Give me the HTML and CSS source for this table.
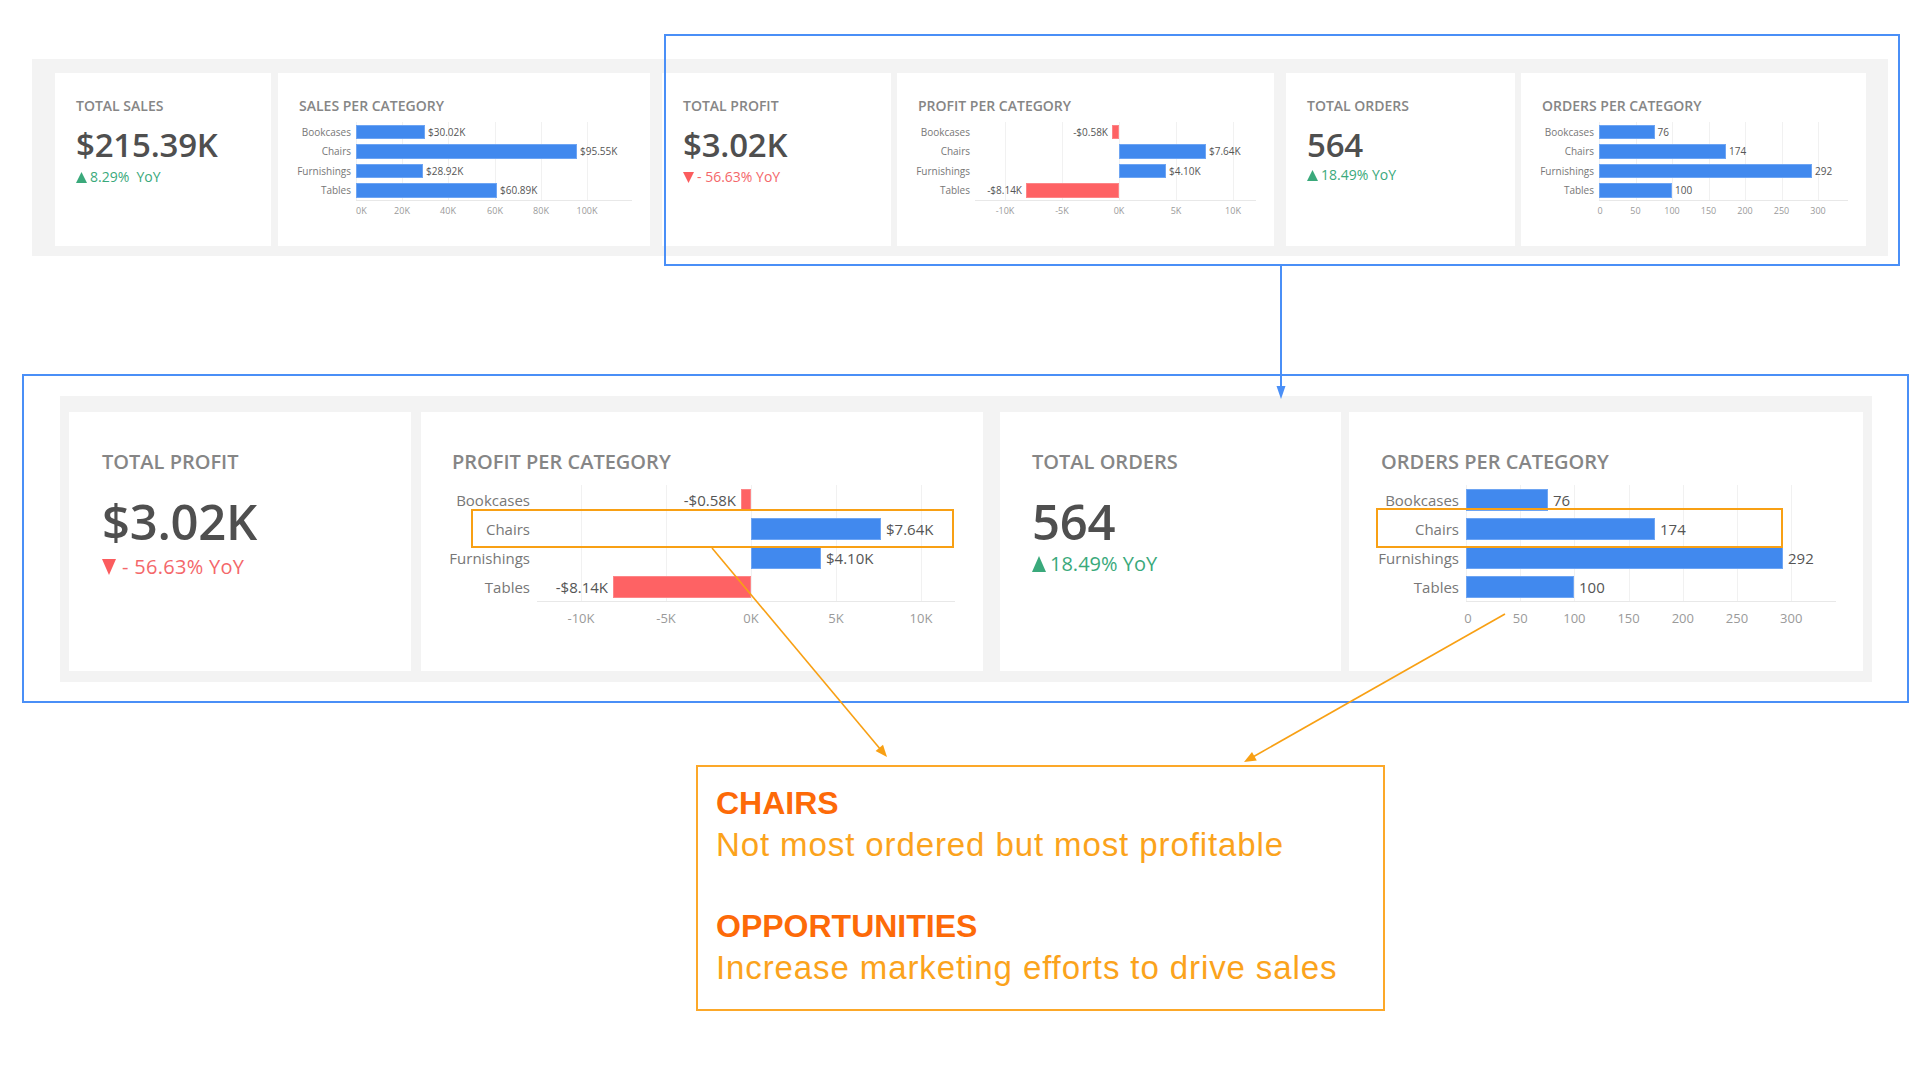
FILE: index.html
```html
<!DOCTYPE html>
<html lang="en">
<head>
<meta charset="utf-8">
<title>Dashboard insight</title>
<link rel="stylesheet" href="styles.css">
</head>
<body>
<div class="page">

  <section class="band band-top">
    <div class="card kpi-sm c-w216">
      <div class="title-sm">TOTAL SALES</div>
      <div class="value-sm">$215.39K</div>
      <div class="yoy yoy-sm up"><svg class="tri-sm" viewBox="0 0 10 10"><polygon points="5,0 10,10 0,10"/></svg><span>8.29%&nbsp; YoY</span></div>
    </div>

    <div class="card chart-card-sm c-w372 ml7">
      <div class="title-sm">SALES PER CATEGORY</div>
      <div class="chart chart-sm">
        <div class="cats"><span>Bookcases</span><span>Chairs</span><span>Furnishings</span><span>Tables</span></div>
        <div class="plot">
          <i class="gl" style="left:0px"></i><i class="gl" style="left:46px"></i><i class="gl" style="left:92px"></i><i class="gl" style="left:139px"></i><i class="gl" style="left:185px"></i><i class="gl" style="left:231px"></i>
          <div class="row"><div class="bar" style="width:69px"></div><span class="val">$30.02K</span></div>
          <div class="row"><div class="bar" style="width:221px"></div><span class="val">$95.55K</span></div>
          <div class="row"><div class="bar" style="width:67px"></div><span class="val">$28.92K</span></div>
          <div class="row"><div class="bar" style="width:141px"></div><span class="val">$60.89K</span></div>
        </div>
        <div class="ticks"><span class="first" style="left:0px">0K</span><span style="left:46px">20K</span><span style="left:92px">40K</span><span style="left:139px">60K</span><span style="left:185px">80K</span><span style="left:231px">100K</span></div>
      </div>
    </div>

    <div class="card kpi-sm c-w229 ml12">
      <div class="title-sm">TOTAL PROFIT</div>
      <div class="value-sm">$3.02K</div>
      <div class="yoy yoy-sm down"><svg class="tri-sm" viewBox="0 0 10 10"><polygon points="0,0 10,0 5,10"/></svg><span>- 56.63% YoY</span></div>
    </div>

    <div class="card chart-card-sm c-w377 ml6">
      <div class="title-sm">PROFIT PER CATEGORY</div>
      <div class="chart chart-sm">
        <div class="cats"><span>Bookcases</span><span>Chairs</span><span>Furnishings</span><span>Tables</span></div>
        <div class="plot">
          <i class="gl" style="left:30px"></i><i class="gl" style="left:87px"></i><i class="gl" style="left:144px"></i><i class="gl" style="left:201px"></i><i class="gl" style="left:258px"></i>
          <div class="row"><div class="neg neg-sm"><span class="val nval">-$0.58K</span><div class="bar red" style="width:7px"></div></div><div class="pos"></div></div>
          <div class="row"><div class="neg neg-sm"></div><div class="pos"><div class="bar" style="width:87px"></div><span class="val">$7.64K</span></div></div>
          <div class="row"><div class="neg neg-sm"></div><div class="pos"><div class="bar" style="width:47px"></div><span class="val">$4.10K</span></div></div>
          <div class="row"><div class="neg neg-sm"><span class="val nval">-$8.14K</span><div class="bar red" style="width:93px"></div></div><div class="pos"></div></div>
        </div>
        <div class="ticks"><span style="left:30px">-10K</span><span style="left:87px">-5K</span><span style="left:144px">0K</span><span style="left:201px">5K</span><span style="left:258px">10K</span></div>
      </div>
    </div>

    <div class="card kpi-sm c-w229 ml12">
      <div class="title-sm">TOTAL ORDERS</div>
      <div class="value-sm">564</div>
      <div class="yoy yoy-sm up raise"><svg class="tri-sm" viewBox="0 0 10 10"><polygon points="5,0 10,10 0,10"/></svg><span>18.49% YoY</span></div>
    </div>

    <div class="card chart-card-sm c-w345 ml6">
      <div class="title-sm">ORDERS PER CATEGORY</div>
      <div class="chart chart-sm">
        <div class="cats"><span>Bookcases</span><span>Chairs</span><span>Furnishings</span><span>Tables</span></div>
        <div class="plot">
          <i class="gl" style="left:0px"></i><i class="gl" style="left:36.5px"></i><i class="gl" style="left:73px"></i><i class="gl" style="left:109.5px"></i><i class="gl" style="left:146px"></i><i class="gl" style="left:182.5px"></i><i class="gl" style="left:219px"></i>
          <div class="row"><div class="bar" style="width:55.5px"></div><span class="val">76</span></div>
          <div class="row"><div class="bar" style="width:127px"></div><span class="val">174</span></div>
          <div class="row"><div class="bar" style="width:213px"></div><span class="val">292</span></div>
          <div class="row"><div class="bar" style="width:73px"></div><span class="val">100</span></div>
        </div>
        <div class="ticks"><span style="left:1px">0</span><span style="left:36.5px">50</span><span style="left:73px">100</span><span style="left:109.5px">150</span><span style="left:146px">200</span><span style="left:182.5px">250</span><span style="left:219px">300</span></div>
      </div>
    </div>
  </section>

  <section class="focus">
    <div class="band band-big">
      <div class="card kpi-lg c-w342 pl33">
        <div class="title-lg">TOTAL PROFIT</div>
        <div class="value-lg">$3.02K</div>
        <div class="yoy yoy-lg down"><svg class="tri-lg" viewBox="0 0 14 16"><polygon points="0,0 14,0 7,16"/></svg><span>- 56.63% YoY</span></div>
      </div>

      <div class="card chart-card-lg c-w562 ml10 pl31">
        <div class="title-lg">PROFIT PER CATEGORY</div>
        <div class="chart chart-lg pr28">
          <div class="cats"><span>Bookcases</span><span>Chairs</span><span>Furnishings</span><span>Tables</span></div>
          <div class="plot">
            <i class="gl" style="left:44px"></i><i class="gl" style="left:129px"></i><i class="gl" style="left:214px"></i><i class="gl" style="left:299px"></i><i class="gl" style="left:384px"></i>
            <div class="row"><div class="neg neg-lg"><span class="val nval">-$0.58K</span><div class="bar red" style="width:10px"></div></div><div class="pos"></div></div>
            <div class="row"><div class="neg neg-lg"></div><div class="pos"><div class="bar" style="width:130px"></div><span class="val">$7.64K</span></div></div>
            <div class="row"><div class="neg neg-lg"></div><div class="pos"><div class="bar" style="width:70px"></div><span class="val">$4.10K</span></div></div>
            <div class="row"><div class="neg neg-lg"><span class="val nval">-$8.14K</span><div class="bar red" style="width:138px"></div></div><div class="pos"></div></div>
          </div>
          <div class="ticks"><span style="left:44px">-10K</span><span style="left:129px">-5K</span><span style="left:214px">0K</span><span style="left:299px">5K</span><span style="left:384px">10K</span></div>
        </div>
      </div>

      <div class="card kpi-lg c-w341 ml17 pl32">
        <div class="title-lg">TOTAL ORDERS</div>
        <div class="value-lg">564</div>
        <div class="yoy yoy-lg up raise-lg"><svg class="tri-lg" viewBox="0 0 14 16"><polygon points="7,0 14,16 0,16"/></svg><span>18.49% YoY</span></div>
      </div>

      <div class="card chart-card-lg c-w514 ml8 pl32">
        <div class="title-lg">ORDERS PER CATEGORY</div>
        <div class="chart chart-lg pr27">
          <div class="cats"><span>Bookcases</span><span>Chairs</span><span>Furnishings</span><span>Tables</span></div>
          <div class="plot">
            <i class="gl" style="left:0px"></i><i class="gl" style="left:54.2px"></i><i class="gl" style="left:108.4px"></i><i class="gl" style="left:162.6px"></i><i class="gl" style="left:216.8px"></i><i class="gl" style="left:271px"></i><i class="gl" style="left:325.2px"></i>
            <div class="row"><div class="bar" style="width:82px"></div><span class="val">76</span></div>
            <div class="row"><div class="bar" style="width:189px"></div><span class="val">174</span></div>
            <div class="row"><div class="bar" style="width:317px"></div><span class="val">292</span></div>
            <div class="row"><div class="bar" style="width:108px"></div><span class="val">100</span></div>
          </div>
          <div class="ticks"><span style="left:2px">0</span><span style="left:54.2px">50</span><span style="left:108.4px">100</span><span style="left:162.6px">150</span><span style="left:216.8px">200</span><span style="left:271px">250</span><span style="left:325.2px">300</span></div>
        </div>
      </div>
    </div>
  </section>

  <section class="callout">
    <h3>CHAIRS</h3>
    <p>Not most ordered but most profitable</p>
    <div class="spacer"></div>
    <h3>OPPORTUNITIES</h3>
    <p>Increase marketing efforts to drive sales</p>
  </section>

  <svg class="overlay" width="1920" height="1080" viewBox="0 0 1920 1080">
    <rect class="frame-blue" x="665" y="35" width="1234" height="230"/>
    <line class="link-blue" x1="1281" y1="266" x2="1281" y2="388"/>
    <polygon class="head-blue" points="1276.5,386 1285.5,386 1281,399"/>
    <rect class="hl" x="472" y="510" width="481" height="37"/>
    <rect class="hl" x="1377" y="509" width="405" height="38"/>
    <line class="link-orange" x1="712" y1="548" x2="881" y2="750"/>
    <polygon class="head-orange" points="875.6,750.9 883.0,744.7 887,757"/>
    <line class="link-orange" x1="1505" y1="614" x2="1252" y2="757.5"/>
    <polygon class="head-orange" points="1252.0,752.0 1256.8,760.4 1244,762"/>
  </svg>
</div>
</body>
</html>
```

FILE: styles.css
```css
* {
  box-sizing: border-box;
  margin: 0;
  padding: 0;
}

html, body {
  width: 1920px;
  height: 1080px;
  overflow: hidden;
  background: #ffffff;
}

body {
  font-family: "Open Sans", "Liberation Sans", sans-serif;
  color: #555555;
}

.page {
  position: relative;
  width: 1920px;
  height: 1080px;
  padding-top: 59px;
}

/* ---------- bands & cards ---------- */
.band {
  display: flex;
  background: #f3f3f3;
}

.band-top {
  margin-left: 32px;
  width: 1856px;
  height: 197px;
  padding: 14px 22px 10px 23px;
}

.card {
  flex: none;
  height: 100%;
  background: #ffffff;
}

.band-top .card {
  padding: 24px 0 0 21px;
}

.c-w216 { width: 216px; }
.c-w372 { width: 372px; }
.c-w229 { width: 229px; }
.c-w377 { width: 377px; }
.c-w345 { width: 345px; }
.c-w342 { width: 342px; }
.c-w562 { width: 562px; }
.c-w341 { width: 341px; }
.c-w514 { width: 514px; }

.ml6 { margin-left: 6px; }
.ml7 { margin-left: 7px; }
.ml8 { margin-left: 8px; }
.ml10 { margin-left: 10px; }
.ml12 { margin-left: 12px; }
.ml17 { margin-left: 17px; }

/* ---------- KPI text ---------- */
.title-sm {
  font-size: 14px;
  line-height: 18px;
  font-weight: 600;
  color: #868686;
  white-space: nowrap;
}

.value-sm {
  margin-top: 11px;
  font-size: 33px;
  line-height: 38px;
  font-weight: 600;
  color: #4f4f4f;
  letter-spacing: -0.2px;
}

.yoy {
  display: flex;
  align-items: center;
  white-space: nowrap;
  font-weight: 500;
}

.yoy.up { color: #3aa97b; fill: #3aa97b; }
.yoy.down { color: #f4676a; fill: #fb5c5e; }

.yoy-sm {
  margin-top: 4px;
  font-size: 14px;
  line-height: 18px;
  gap: 3px;
}

.yoy-sm.raise { margin-top: 2px; }

.tri-sm {
  width: 11px;
  height: 11px;
  flex: none;
}

.title-lg {
  font-size: 20px;
  line-height: 26px;
  font-weight: 600;
  color: #868686;
  white-space: nowrap;
}

.value-lg {
  margin-top: 18px;
  font-size: 49px;
  line-height: 56px;
  font-weight: 600;
  color: #4f4f4f;
  letter-spacing: -0.3px;
}

.yoy-lg {
  margin-top: 5px;
  font-size: 20px;
  line-height: 26px;
  gap: 6px;
  letter-spacing: 0.3px;
}

.yoy-lg.raise-lg { margin-top: 2px; gap: 4px; letter-spacing: 0; }

.tri-lg {
  width: 14px;
  height: 16px;
  flex: none;
}

/* ---------- charts ---------- */
.chart {
  display: grid;
}

.chart-sm {
  grid-template-columns: 52px 1fr;
  column-gap: 5px;
  margin-top: 7px;
  padding-right: 18px;
}

.cats {
  display: flex;
  flex-direction: column;
}

.cats span {
  display: flex;
  align-items: center;
  justify-content: flex-end;
  white-space: nowrap;
  color: #777777;
}

.plot {
  position: relative;
  border-bottom: 1px solid #e8e8e8;
}

.gl {
  position: absolute;
  top: 0;
  bottom: 0;
  width: 1px;
  background: #f1f1f1;
}

.row {
  position: relative;
  display: flex;
  align-items: center;
}

.neg {
  flex: none;
  display: flex;
  align-items: center;
  justify-content: flex-end;
  height: 100%;
}

.pos {
  flex: 1;
  display: flex;
  align-items: center;
  height: 100%;
}

.bar {
  flex: none;
  background: #4189ee;
  box-shadow: inset 0 0 0 1px #6ea5f3;
}

.bar.red {
  background: #fe6264;
  box-shadow: inset 0 0 0 1px #fd8587;
}

.val {
  white-space: nowrap;
  color: #555555;
}

.ticks {
  grid-column: 2;
  position: relative;
}

.ticks span {
  position: absolute;
  top: 0;
  transform: translateX(-50%);
  white-space: nowrap;
  color: #9a9a9a;
}

.ticks span.first {
  transform: none;
}

/* small chart sizes */
.chart-sm .cats span,
.chart-sm .row {
  height: 19.5px;
  font-size: 10px;
}

.chart-sm .bar { height: 14.5px; }
.chart-sm .val { font-size: 10px; padding-left: 3px; }
.chart-sm .nval { padding-left: 0; padding-right: 4px; }
.neg-sm { width: 144px; }

.chart-sm .ticks {
  height: 12px;
  margin-top: 4px;
}

.chart-sm .ticks span {
  font-size: 9px;
  line-height: 12px;
}

/* ---------- focus section ---------- */
.focus {
  margin: 118px 0 0 22px;
  width: 1887px;
  height: 329px;
  border: 2px solid #4a8ff7;
  padding: 20px 0 0 36px;
}

.band-big {
  width: 1812px;
  height: 286px;
  padding: 16px 9px 11px 9px;
}

.band-big .card {
  padding-top: 37px;
}

.pl31 { padding-left: 31px; }
.pl32 { padding-left: 32px; }
.pl33 { padding-left: 33px; }
.pr27 { padding-right: 27px; }
.pr28 { padding-right: 28px; }

.chart-lg {
  grid-template-columns: 78px 1fr;
  column-gap: 7px;
  margin-top: 10px;
}

.chart-lg .cats span,
.chart-lg .row {
  height: 29px;
  font-size: 15px;
}

.chart-lg .bar { height: 22px; }
.chart-lg .val { font-size: 15px; padding-left: 5px; }
.chart-lg .nval { padding-left: 0; padding-right: 5px; }
.neg-lg { width: 214px; }

.chart-lg .ticks {
  height: 16px;
  margin-top: 8px;
}

.chart-lg .ticks span {
  font-size: 13px;
  line-height: 16px;
}

/* ---------- callout ---------- */
.callout {
  margin: 62px 0 0 696px;
  width: 689px;
  height: 246px;
  border: 2px solid #fca829;
  padding: 16px 0 0 18px;
  font-family: "Liberation Sans", Arial, sans-serif;
  font-size: 32px;
  line-height: 41px;
}

.callout h3 {
  font-size: 32px;
  font-weight: 700;
  color: #fd6a08;
}

.callout p {
  font-size: 33px;
  color: #fba31c;
  letter-spacing: 0.9px;
  white-space: nowrap;
}

.callout .spacer {
  height: 41px;
}

/* ---------- overlay annotations ---------- */
.overlay {
  position: absolute;
  top: 0;
  left: 0;
  pointer-events: none;
}

.frame-blue {
  fill: none;
  stroke: #4a8ff7;
  stroke-width: 2;
}

.link-blue {
  stroke: #4a8ff7;
  stroke-width: 2;
}

.head-blue {
  fill: #4a8ff7;
}

.hl {
  fill: none;
  stroke: #f8a014;
  stroke-width: 2;
}

.link-orange {
  stroke: #f8a014;
  stroke-width: 1.6;
}

.head-orange {
  fill: #f8a014;
}
```
